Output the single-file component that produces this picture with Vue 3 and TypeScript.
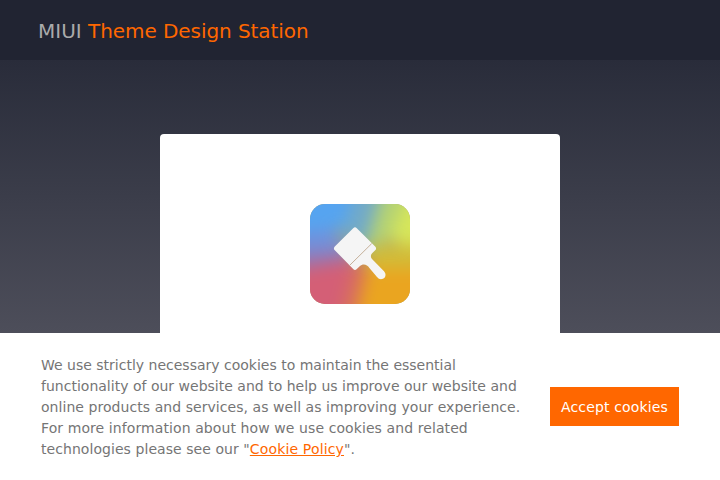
<script setup lang="ts">
import { ref } from 'vue'

const showNotice = ref<boolean>(true)

function acceptCookies(): void {
  showNotice.value = false
}
</script>

<template>
  <div class="page">
    <header class="header">
      <h1 class="brand">MIUI <span class="accent">Theme Design Station</span></h1>
    </header>
    <main class="main">
      <section class="card">
        <svg class="logo" viewBox="0 0 100 100" aria-hidden="true">
          <defs>
            <clipPath id="tile"><rect width="100" height="100" rx="15" /></clipPath>
            <filter id="soften" x="-50%" y="-50%" width="200%" height="200%" color-interpolation-filters="sRGB">
              <feGaussianBlur stdDeviation="8" />
            </filter>
          </defs>
          <g clip-path="url(#tile)">
            <rect width="100" height="100" fill="#a9a36e" />
            <g filter="url(#soften)">
              <path d="M-40-40H54L36 24 22 28-40 34Z" fill="#56a4f0" />
              <path d="M110-40H140V44L88 40 78 32Z" fill="#d6e65a" />
              <path d="M78-40H112L80 32 68 44 50 44Z" fill="#b4d274" />
              <path d="M52-40H80L56 42 32 34Z" fill="#72aac8" />
              <path d="M-40 32 24 26 40 50-40 54Z" fill="#7290da" />
              <path d="M-40 52 38 46 44 60-40 72Z" fill="#9a76b0" />
              <path d="M-40 70 42 56 46 68 24 140H-40Z" fill="#d45f76" />
              <path d="M44 58 60 58 42 140H22Z" fill="#d8705c" />
              <path d="M58 60 82 60 140 62V140H40Z" fill="#eaa520" />
              <path d="M60 42 140 40V64L56 64Z" fill="#d2bc38" />
            </g>
          </g>
          <path
            d="M43.2 24.2Q45 22.4 46.8 24.2L65.2 42.6Q67 44.4 65.2 46.2L62.1 49.3Q59.7 52 62 55L74 67.3C76.8 70.4 75.7 75.2 71 75.2Q68.7 75.2 67 73L59.4 63.9C57.2 60.2 52.8 59.2 49.7 62.3L46.8 65Q45 66.8 43.2 65L24.8 46.2Q23 44.4 24.8 42.6Z"
            fill="#f5f5f5"
          />
          <path d="M39.8 61.2 61.7 39.6" stroke="#c0a890" stroke-width="0.9" />
        </svg>
      </section>
    </main>
    <aside v-if="showNotice" class="notice">
      <p class="message">
        <span>We use strictly necessary cookies to maintain the essential </span>
        <span class="functionality">functionality of our website and to help us improve our website and </span>
        <span class="products">online products and services, as well as improving your experience. </span>
        <span class="details">For more information about how we use cookies and related </span>
        <span class="reference">technologies please see our "<a class="policy" href="#">Cookie Policy</a>".</span>
      </p>
      <button class="accept" type="button" @click="acceptCookies">Accept cookies</button>
    </aside>
  </div>
</template>

<style>
body {
  margin: 0;
}
</style>

<style scoped>
.page {
  display: grid;
  grid-template-rows: 60px 273px 147px;
  height: 100vh;
  overflow: hidden;
  background: #fff;
  font-family: "DejaVu Sans", sans-serif;
}

.header {
  display: flex;
  align-items: center;
  padding: 2px 38px 0;
  background: #212432;
}

.brand {
  margin: 0;
  color: #aaa;
  font-size: 20px;
  font-weight: 400;
  line-height: 30px;
  white-space: nowrap;
}

.accent {
  color: #ff6700;
  letter-spacing: -0.07px;
}

.main {
  display: flex;
  justify-content: center;
  padding-top: 74px;
  overflow: hidden;
  background: linear-gradient(#292c3a, #4d4e5a);
}

.card {
  box-sizing: border-box;
  width: 400px;
  height: 400px;
  padding-top: 70px;
  border-radius: 4px;
  background: #fff;
}

.logo {
  display: block;
  width: 100px;
  height: 100px;
  margin: 0 auto;
}

.notice {
  display: flex;
  align-items: center;
  justify-content: space-between;
  padding: 0 41px;
  background: #fff;
}

.message {
  width: 484px;
  margin: 0;
  padding-top: 2px;
  color: #757575;
  font-size: 14px;
  line-height: 21px;
}

.message > span {
  display: block;
  white-space: nowrap;
}

.message > .functionality {
  letter-spacing: 0.01px;
}

.message > .products {
  letter-spacing: 0.055px;
}

.message > .details {
  letter-spacing: 0.09px;
}

.message > .reference {
  letter-spacing: 0.06px;
}

.message .policy {
  color: #ff6700;
  text-decoration: underline;
  letter-spacing: 0.15px;
}

.accept {
  flex: none;
  width: 129px;
  height: 39px;
  padding: 2px 0 0;
  border: 0;
  background: #ff6700;
  color: #fff;
  font: 14px/21px "DejaVu Sans", sans-serif;
  letter-spacing: 0.15px;
  white-space: nowrap;
  cursor: pointer;
}
</style>
